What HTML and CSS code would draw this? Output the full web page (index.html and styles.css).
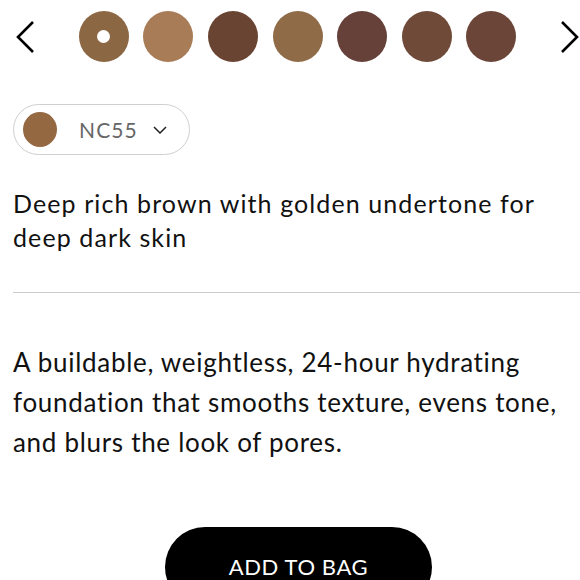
FILE: index.html
```html
<!DOCTYPE html>
<html>
<head>
<meta charset="utf-8">
<link rel="stylesheet" href="styles.css">
</head>
<body>
<div class="page">
  <div class="shades">
    <svg class="chev" width="18" height="32" viewBox="0 0 18 32"><polyline points="17,1 2,16 17,31" fill="none" stroke="#000" stroke-width="2.6"/></svg>
    <div class="swatches">
      <span class="sw sel" style="background:#8c6744"></span>
      <span class="sw" style="background:#a77c56"></span>
      <span class="sw" style="background:#6a4432"></span>
      <span class="sw" style="background:#8f6b48"></span>
      <span class="sw" style="background:#664139"></span>
      <span class="sw" style="background:#6f4a39"></span>
      <span class="sw" style="background:#6b4538"></span>
    </div>
    <svg class="chev" width="18" height="32" viewBox="0 0 18 32"><polyline points="1,1 16,16 1,31" fill="none" stroke="#000" stroke-width="2.6"/></svg>
  </div>
  <div class="picker">
    <span class="dot"></span>
    <span class="code">NC55</span>
    <svg class="caret" width="14" height="8" viewBox="0 0 14 8"><polyline points="1,1 7,7 13,1" fill="none" stroke="#222" stroke-width="1.5"/></svg>
  </div>
  <p class="shade-desc">Deep rich brown with golden undertone for deep dark skin</p>
  <hr class="rule">
  <p class="desc">A buildable, weightless, 24-hour hydrating foundation that smooths texture, evens tone, and blurs the look of pores.</p>
  <button class="add">ADD TO BAG</button>
</div>
</body>
</html>
```
FILE: styles.css
```css
html, body { margin: 0; padding: 0; background: #fff; }
body { font-family: "Lato", "Liberation Sans", sans-serif; color: #111; overflow: hidden; }
.page { width: 580px; height: 580px; overflow: hidden; }
.shades {
  display: flex; align-items: center; justify-content: space-between;
  padding: 11px 1px 0 16px; height: 51px;
}
.chev { display: block; }
.swatches { display: flex; gap: 14.67px; }
.sw {
  display: flex; align-items: center; justify-content: center;
  width: 50px; height: 51px; border-radius: 50%;
}
.sel::after { content: ""; width: 13px; height: 13px; border-radius: 50%; background: #fff; }
.picker {
  margin: 42px 0 0 13px; box-sizing: border-box;
  width: 177px; height: 51px; border: 1.5px solid #cfcfcf; border-radius: 26px;
  display: flex; align-items: center; padding-left: 9px;
}
.dot { width: 34px; height: 35px; border-radius: 50%; background: #946942; }
.code { margin-left: 22px; font-size: 21px; color: #666; letter-spacing: 1.1px; }
.caret { margin-left: 15px; }
.shade-desc { margin: 31px 13px 0; font-size: 25px; line-height: 34px; letter-spacing: 1.1px; }
.rule { margin: 38px 0 0 13px; border: 0; border-top: 1.5px solid #cccccc; height: 0; }
.desc { margin: 49px 13px 0; font-size: 26px; line-height: 40px; letter-spacing: 0.7px; }
.add {
  display: block; margin: 65px 0 0 165px; width: 267px; height: 80px;
  border: 0; border-radius: 40px; background: #000; color: #fff;
  font-family: inherit; font-size: 22px; letter-spacing: 0.6px;
  padding: 0; line-height: 80px; text-align: center;
}
```
